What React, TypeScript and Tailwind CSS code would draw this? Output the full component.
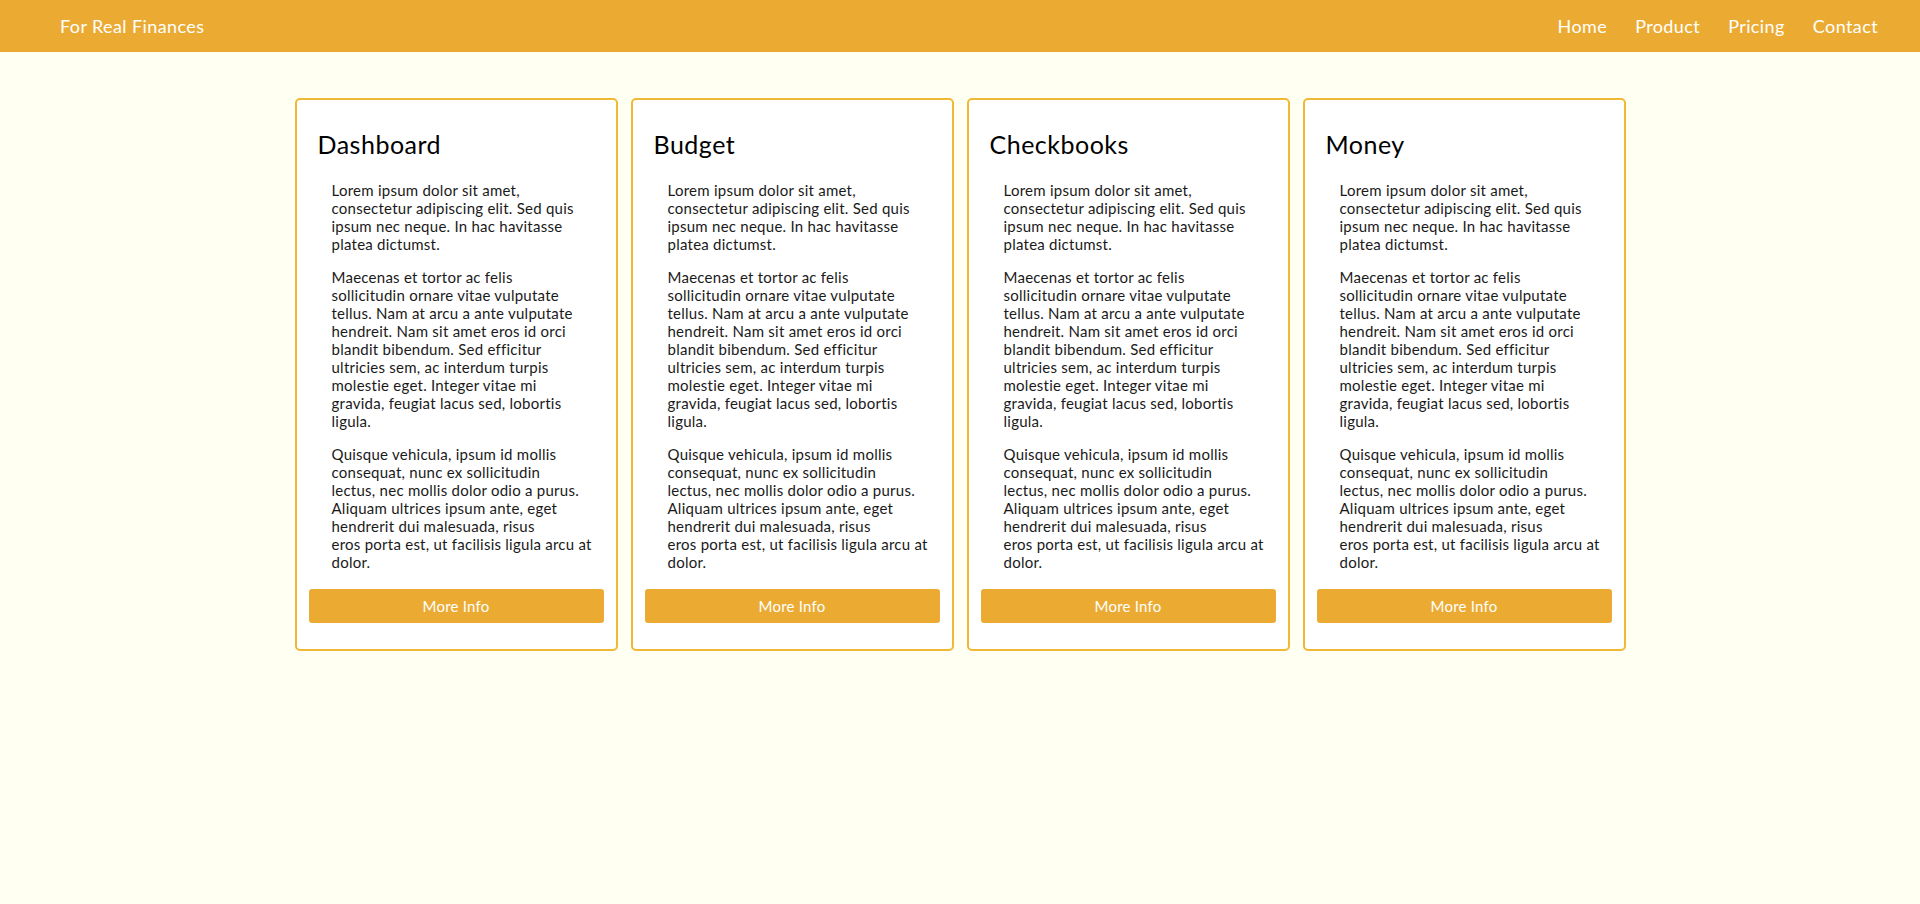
const NAV = ['Home', 'Product', 'Pricing', 'Contact'];

const CARDS = ['Dashboard', 'Budget', 'Checkbooks', 'Money'];

const PARAGRAPHS = [
  [
    'Lorem ipsum dolor sit amet,',
    'consectetur adipiscing elit. Sed quis',
    'ipsum nec neque. In hac havitasse',
    'platea dictumst.',
  ],
  [
    'Maecenas et tortor ac felis',
    'sollicitudin ornare vitae vulputate',
    'tellus. Nam at arcu a ante vulputate',
    'hendreit. Nam sit amet eros id orci',
    'blandit bibendum. Sed efficitur',
    'ultricies sem, ac interdum turpis',
    'molestie eget. Integer vitae mi',
    'gravida, feugiat lacus sed, lobortis',
    'ligula.',
  ],
  [
    'Quisque vehicula, ipsum id mollis',
    'consequat, nunc ex sollicitudin',
    'lectus, nec mollis dolor odio a purus.',
    'Aliquam ultrices ipsum ante, eget',
    'hendrerit dui malesuada, risus',
    'eros porta est, ut facilisis ligula arcu at',
    'dolor.',
  ],
];

function Card({ title }: { title: string }) {
  return (
    <div className="w-[323px] rounded-[5px] border-2 border-[#f0b834] bg-white px-[12px] pt-[30px] pb-[26px]">
      <h2 className="pl-[9px] text-[25px] leading-[29px] tracking-[0.5px] text-black">{title}</h2>
      <div className="mt-[22px] pl-[23px] text-[15px] leading-[18px] tracking-[0.25px] text-[#1a1a1a]">
        {PARAGRAPHS.map((lines, i) => (
          <p key={i} className={i > 0 ? 'mt-[15px] whitespace-nowrap' : 'whitespace-nowrap'}>
            {lines.map((l, j) => (
              <span key={j}>
                {l}
                {j < lines.length - 1 && <br />}
              </span>
            ))}
          </p>
        ))}
      </div>
      <button className="mt-[18px] h-[34px] w-full rounded-[3px] bg-[#ebab32] text-[15px] tracking-[0.2px] text-white">
        More Info
      </button>
    </div>
  );
}

export default function App() {
  return (
    <div className="min-h-[904px] bg-[#fffff2] font-['Lato',sans-serif]">
      <header className="flex h-[52px] items-center justify-between bg-[#ebab32] pl-[60px] pr-[42px] text-white">
        <span className="text-[18px] tracking-[0.4px]">For Real Finances</span>
        <nav className="flex gap-[28px] text-[18px] tracking-[0.4px]">
          {NAV.map((n) => (
            <a key={n} href="#">
              {n}
            </a>
          ))}
        </nav>
      </header>
      <main className="flex justify-center gap-[13px] pt-[46px]">
        {CARDS.map((c) => (
          <Card key={c} title={c} />
        ))}
      </main>
    </div>
  );
}
